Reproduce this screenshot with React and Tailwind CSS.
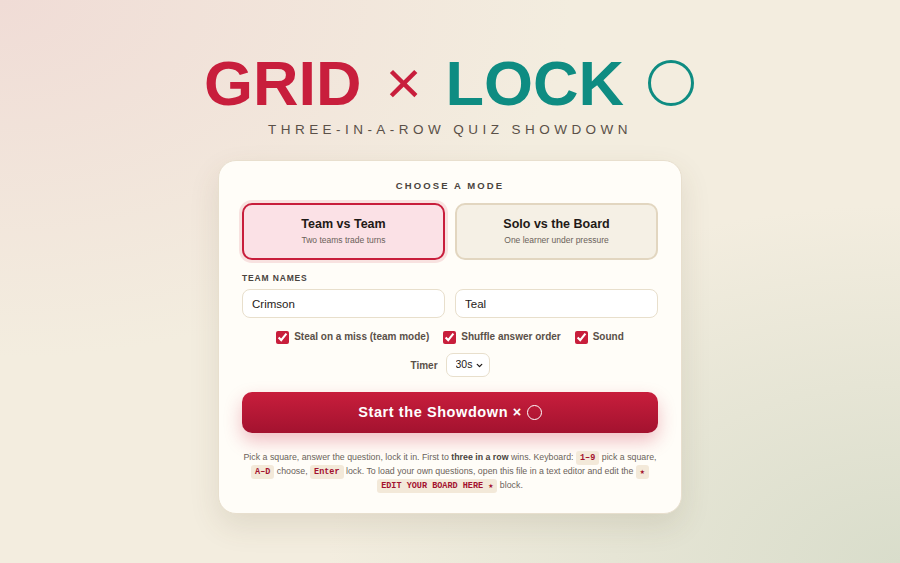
import React, { useState } from "react";
import { ChevronDown } from "lucide-react";

function Kbd({ children }) {
  return (
    <code className="rounded-[3px] bg-[#f3e9d9] px-[4px] py-[2px] font-['Liberation_Mono',monospace] text-[8.5px] leading-none font-bold text-[#a3122f] [box-decoration-break:clone]">
      {children}
    </code>
  );
}

function Check({ label, checked, onChange }) {
  return (
    <label className="flex items-center gap-[5px] text-[10px] leading-[14px] font-bold text-[#5a5048]">
      <input
        type="checkbox"
        checked={checked}
        onChange={onChange}
        className="m-0 h-[13px] w-[13px] accent-[#c81e3c]"
      />
      {label}
    </label>
  );
}

function ModeCard({ active, title, sub, onClick }) {
  return (
    <button
      onClick={onClick}
      className={
        active
          ? "flex h-[57px] flex-col items-center justify-center rounded-[10px] border-2 border-[#c81e3c] bg-[#fbe1e6] shadow-[0_0_0_3px_rgba(200,30,60,0.12)]"
          : "flex h-[57px] flex-col items-center justify-center rounded-[10px] border-2 border-[#e2d6c0] bg-[#f5f0e5]"
      }
    >
      <span className="text-[12.5px] leading-[15px] font-bold text-[#1f1a17]">{title}</span>
      <span className="mt-[3px] text-[8.5px] leading-[11px] text-[#6b625a]">{sub}</span>
    </button>
  );
}

export default function App() {
  const [mode, setMode] = useState("team");
  const [steal, setSteal] = useState(true);
  const [shuffle, setShuffle] = useState(true);
  const [sound, setSound] = useState(true);

  return (
    <div className="relative min-h-[563px] w-full overflow-hidden bg-[#f3eddf] font-['Liberation_Sans',Arial,sans-serif]">
      {/* background washes */}
      <div className="pointer-events-none absolute inset-0 bg-[radial-gradient(ellipse_at_0%_0%,#f0dcd6_0%,rgba(240,220,214,0)_45%)]"></div>
      <div className="pointer-events-none absolute inset-0 bg-[radial-gradient(ellipse_at_100%_100%,#d9ddcb_0%,rgba(217,221,203,0)_45%)]"></div>

      <div className="relative flex flex-col items-center pt-[47px]">
        {/* Title */}
        <h1 className="mr-[2px] flex items-center text-[63px] font-bold leading-[72px]">
          <span className="text-[#c81e3c]">GRID</span>
          <span className="mx-[24px] text-[62px] font-normal leading-[72px] text-[#c81e3c]">×</span>
          <span className="text-[#0e8c82]">LOCK</span>
          <span className="ml-[24px] inline-block h-[46px] w-[46px] rounded-full border-[3px] border-[#0e8c82]"></span>
        </h1>
        <div className="mt-[3px] text-[13.5px] leading-[16px] tracking-[0.33em] text-[#5a5048]">
          THREE-IN-A-ROW QUIZ SHOWDOWN
        </div>

        {/* Card */}
        <div className="mt-[22px] w-[464px] rounded-[18px] border border-[#e8dfce] bg-[#fffdf8] px-[23px] pt-[19px] pb-[21px] shadow-[0_12px_30px_rgba(90,70,40,0.12)]">
          <div className="text-center text-[9.5px] leading-[12px] font-bold tracking-[0.22em] text-[#4a443e]">
            CHOOSE A MODE
          </div>

          <div className="mt-[11px] grid grid-cols-2 gap-[10px]">
            <ModeCard
              active={mode === "team"}
              title="Team vs Team"
              sub="Two teams trade turns"
              onClick={() => setMode("team")}
            />
            <ModeCard
              active={mode === "solo"}
              title="Solo vs the Board"
              sub="One learner under pressure"
              onClick={() => setMode("solo")}
            />
          </div>

          <div className="mt-[13px] text-[8.5px] leading-[10px] font-bold tracking-[0.1em] text-[#4a443e]">
            TEAM NAMES
          </div>
          <div className="mt-[6px] grid grid-cols-2 gap-[10px]">
            <input
              defaultValue="Crimson"
              className="h-[29px] rounded-[8px] border-[1.5px] border-[#e8dfcc] bg-white px-[9px] text-[11.5px] text-[#1f1a17] outline-none"
            />
            <input
              defaultValue="Teal"
              className="h-[29px] rounded-[8px] border-[1.5px] border-[#e8dfcc] bg-white px-[9px] text-[11.5px] text-[#1f1a17] outline-none"
            />
          </div>

          <div className="mt-[12px] flex items-center justify-center gap-[14px]">
            <Check label="Steal on a miss (team mode)" checked={steal} onChange={() => setSteal(!steal)} />
            <Check label="Shuffle answer order" checked={shuffle} onChange={() => setShuffle(!shuffle)} />
            <Check label="Sound" checked={sound} onChange={() => setSound(!sound)} />
          </div>

          <div className="mt-[9px] flex items-center justify-center gap-[8px]">
            <span className="text-[10px] font-bold text-[#5a5048]">Timer</span>
            <div className="relative">
              <select
                defaultValue="30"
                className="block h-[24px] w-[44px] appearance-none rounded-[7px] border-[1.5px] border-[#e8dfcc] bg-white pl-[9px] text-[10.5px] text-[#1f1a17] outline-none"
              >
                <option value="15">15s</option>
                <option value="30">30s</option>
                <option value="60">60s</option>
              </select>
              <ChevronDown
                size={9}
                strokeWidth={3.5}
                className="pointer-events-none absolute right-[6px] top-[8px] text-[#1f1a17]"
              />
            </div>
          </div>

          <button className="mt-[15px] flex h-[41px] w-full items-center justify-center gap-[5px] rounded-[10px] bg-[linear-gradient(180deg,#c81e3c_0%,#a3122f_100%)] text-[14.5px] font-bold tracking-[0.04em] text-white shadow-[0_8px_18px_rgba(200,30,60,0.28)]">
            Start the Showdown ×
            <span className="inline-block h-[15px] w-[15px] rounded-full border-[1.5px] border-white"></span>
          </button>

          <p className="mt-[17px] text-center text-[8.8px] leading-[14px] text-[#6b625a]">
            Pick a square, answer the question, lock it in. First to{" "}
            <b className="text-[#4a443e]">three in a row</b> wins. Keyboard: <Kbd>1–9</Kbd> pick a square,{" "}
            <Kbd>A–D</Kbd> choose, <Kbd>Enter</Kbd> lock. To load your own questions, open this file in a text
            editor and edit the <Kbd>★ EDIT YOUR BOARD HERE ★</Kbd> block.
          </p>
        </div>
      </div>
    </div>
  );
}
